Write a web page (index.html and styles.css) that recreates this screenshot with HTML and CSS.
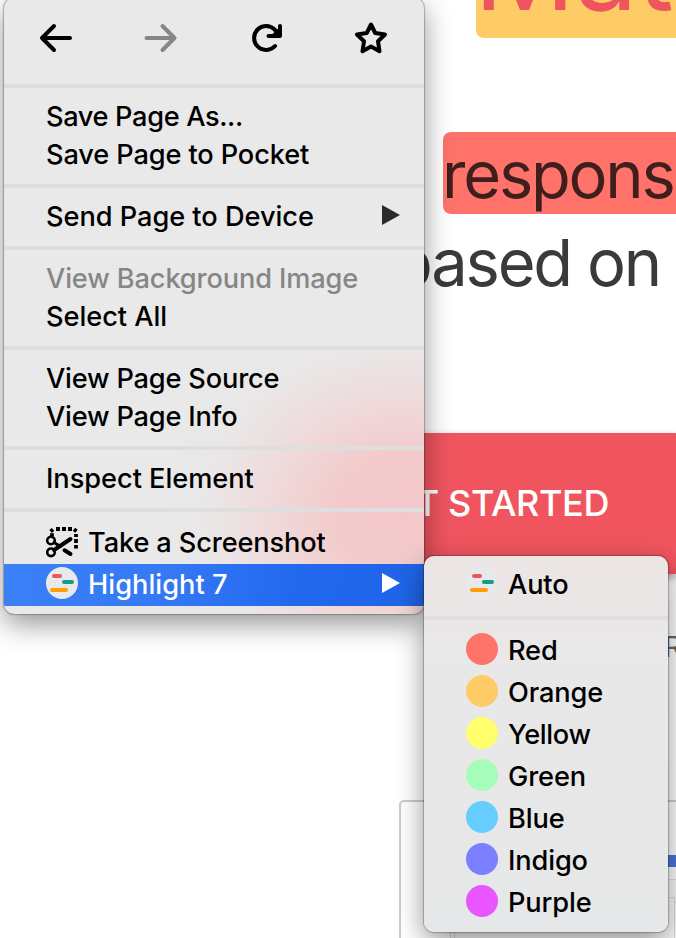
FILE: index.html
```html
<!DOCTYPE html>
<html lang="en">
<head>
<meta charset="utf-8">
<title>Context menu</title>
<link rel="stylesheet" href="styles.css">
</head>
<body>
<main class="page">
  <h1 class="title"><span class="mark mark-orange">Mat</span></h1>
  <p class="lead"><span class="mark mark-red">respons</span></p>
  <p class="lead lead-second">based on</p>
  <div class="cta">GET STARTED</div>
  <p class="release">R</p>
  <section class="card"><div class="bar"></div><div class="inner"><div class="inset"></div></div></section>
</main>

<nav class="menu">
  <div class="tools">
    <svg class="tool" viewBox="0 0 36 36"><path d="M32 18H4M16 6L4 18l12 12"/></svg>
    <svg class="tool muted" viewBox="0 0 36 36"><path d="M3.500 18H31.500M19.500 6l12 12-12 12"/></svg>
    <svg class="tool" viewBox="0 0 36 36"><path d="M27 26A12 12 0 1 1 26.800 9.700L30 14"/><path d="M32 6v10H20.500"/><path class="solid" d="M32 8v8h-8z"/></svg>
    <svg class="tool" viewBox="0 0 36 36"><path d="M18 4.500l4.200 8.500 9.800 1.500-7 6.700 1.500 10L18 26.600l-8.500 4.600 1.500-10-7-6.700 9.800-1.500z"/></svg>
  </div>
  <hr>
  <div class="item"><span class="t-saveas">Save Page As...</span></div>
  <div class="item"><span>Save Page to Pocket</span></div>
  <hr>
  <div class="item"><span class="t-send">Send Page to Device</span><i class="arrow"></i></div>
  <hr>
  <div class="item disabled"><span>View Background Image</span></div>
  <div class="item"><span class="t-send">Select All</span></div>
  <hr>
  <div class="item"><span class="t-view">View Page Source</span></div>
  <div class="item"><span class="t-view">View Page Info</span></div>
  <hr>
  <div class="item"><span class="t-inspect">Inspect Element</span></div>
  <hr>
  <div class="item tall">
    <svg class="icon scissors" viewBox="0 0 32 32"><path class="dashes" d="M6 9V6.200M4.600 4.500l2.400-2.200M10 2h4M16 2h4M22 2h4M28 2.300l2.500 2M30 7v3M30 12v4M30 18v3.500"/><circle cx="5" cy="13.500" r="3.800"/><circle cx="5" cy="25.300" r="3.800"/><path class="blade" d="M8 23L24.500 12"/><path class="blade thin" d="M8 15.500L14.500 19.500"/><path class="blade" d="M18.500 23.300l6 3.700"/></svg>
    <span>Take a Screenshot</span>
  </div>
  <div class="item tall selected">
    <svg class="icon" viewBox="0 0 32 32"><circle class="disc" cx="16" cy="16" r="16"/><rect class="r" x="6" y="7" width="10" height="4" rx="2"/><rect class="g" x="16" y="13" width="12" height="4" rx="2"/><rect class="o" x="4" y="21" width="18" height="4" rx="2"/></svg>
    <span class="t-hl">Highlight 7</span><i class="arrow"></i>
  </div>
</nav>

<nav class="menu submenu">
  <div class="item tall">
    <svg class="icon" viewBox="0 0 32 32"><circle class="disc" cx="16" cy="16" r="16"/><rect class="r" x="6" y="7" width="10" height="4" rx="2"/><rect class="g" x="16" y="13" width="12" height="4" rx="2"/><rect class="o" x="4" y="21" width="18" height="4" rx="2"/></svg>
    <span>Auto</span>
  </div>
  <hr>
  <div class="item tall"><i class="icon dot red"></i><span>Red</span></div>
  <div class="item tall"><i class="icon dot orange"></i><span>Orange</span></div>
  <div class="item tall"><i class="icon dot yellow"></i><span class="t-saveas">Yellow</span></div>
  <div class="item tall"><i class="icon dot green"></i><span>Green</span></div>
  <div class="item tall"><i class="icon dot blue"></i><span>Blue</span></div>
  <div class="item tall"><i class="icon dot indigo"></i><span>Indigo</span></div>
  <div class="item tall"><i class="icon dot purple"></i><span>Purple</span></div>
</nav>
</body>
</html>
```
FILE: styles.css
```css
* { box-sizing: border-box; }
body { margin: 0; width: 676px; height: 938px; overflow: hidden; position: relative; background: #fff; font-family: Inter, "Liberation Sans", sans-serif; }
.page { height: 938px; overflow: hidden; display: flex; flex-direction: column; }
.title { margin: 0 0 94px 476px; height: 38px; display: flex; align-items: flex-end; font-size: 112px; font-weight: 400; line-height: 82px; }
.mark { display: block; flex: none; border-radius: 8px; width: 400px; }
.mark-orange { height: 140px; line-height: 143px; background: #ffcb66; color: #f0555f; letter-spacing: -0.500px; text-indent: -2px; }
.lead { margin: 0 0 0 443px; font-size: 65px; line-height: 86px; height: 82px; color: #3a3a3a; white-space: nowrap; letter-spacing: -2.200px; }
.mark-red { height: 82px; background: #ff736b; color: #3f1f1d; text-indent: -1px; }
.lead-second { margin: 6px 0 0 393px; line-height: 85px; }
.cta { flex: none; margin: 131px 0 0 300px; height: 141px; padding-left: 68px; line-height: 141px; font-size: 36px; font-weight: 450; color: #fff; background: #f0555f; box-shadow: 0 4px 8px rgba(0,0,0,.35); white-space: nowrap; letter-spacing: -0.400px; }
.release { margin: 53px 0 0 664px; font-size: 28px; line-height: 40px; color: #666; }
.card { flex: none; margin: 133px 0 0 399px; width: 400px; height: 300px; border: 2px solid #ccc; border-radius: 5px; padding-top: 53px; }
.bar { height: 12px; background: #4a76d8; margin-left: 100px; }
.inner { margin: 12px 0 0 49px; height: 200px; border: 1px solid #e2e2e2; background: #fafafa; }
.inset { margin: 17px 0 0 3px; width: 221px; height: 60px; border: 1px solid #ddd; }

.menu { position: absolute; left: 4px; top: -2px; width: 420px; height: 616px; padding: 2px 0 8px; border-radius: 10px; overflow: hidden; color: #000; font-size: 27.200px; font-weight: 450; letter-spacing: -0.130px;
  background: radial-gradient(ellipse 240px 200px at 400px 515px, #f4c8ca 0%, #f3cbcc 30%, rgba(240,216,217,.7) 62%, rgba(236,226,226,.3) 82%, rgba(233,233,233,0) 100%), #e9e9e9;
  box-shadow: 0 0 1px 1px rgba(0,0,0,.25), 0 10px 28px rgba(0,0,0,.42); }
.submenu { left: 424px; top: 556px; width: 244px; height: 376px; padding: 8px 0; background: linear-gradient(#ece5e5, #e9e8e8 30%, #e6e7e8); }
.tools { height: 84px; padding: 20px 35px 28px 34px; display: flex; justify-content: space-between; }
.tool { width: 36px; height: 36px; fill: none; stroke: #000; stroke-width: 4; stroke-linecap: round; stroke-linejoin: round; }
.muted { stroke: #868686; }
.solid { fill: #000; stroke-width: 2; }
hr { margin: 0 0 10px; height: 4px; border: 0; background: #dedede; }
.item + hr { margin-top: 10px; }
.item { height: 38px; padding: 0 24px 0 42px; display: flex; align-items: center; line-height: 38px; white-space: nowrap; }
.tall { height: 42px; }
.t-saveas { letter-spacing: -0.360px; }
.t-view { letter-spacing: -0.190px; }
.t-send { letter-spacing: -0.040px; }
.t-inspect { letter-spacing: -0.040px; }
.t-hl { letter-spacing: 0.040px; }
.disabled { color: #868686; }
.selected { color: #fff; background: linear-gradient(100deg, #3b80f6 0%, #3478f5 40%, #2268ee 70%, #1f64e6); }
.arrow { margin: -4px 0 0 auto; border-left: 18px solid #2b2b2b; border-top: 10px solid transparent; border-bottom: 10px solid transparent; }
.selected .arrow { border-left-color: #fff; }
.icon { flex: none; width: 32px; height: 32px; margin: -4px 10px 0 0; }
.scissors { margin-top: 0; fill: none; stroke: #000; stroke-width: 2.600; }
.dashes { stroke-width: 3.800; }
.blade { stroke-width: 4; stroke-linecap: round; }
.thin { stroke-width: 3; }
.disc { fill: #e8e9ea; }
.r { fill: #f0555f; }
.g { fill: #159c85; }
.o { fill: #ff9e02; }
.dot { border-radius: 50%; }
.red { background: #ff736b; }
.orange { background: #ffcb66; }
.yellow { background: #ffff6b; }
.green { background: #a6fcb9; }
.blue { background: #66ceff; }
.indigo { background: #7a80ff; }
.purple { background: #e956ff; }
```
